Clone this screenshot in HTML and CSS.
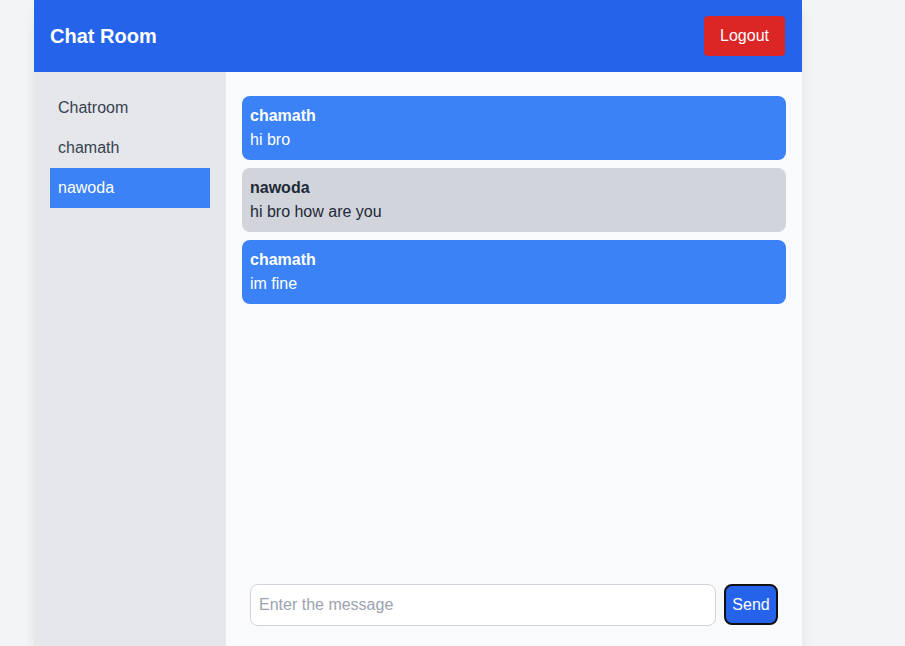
FILE: index.html
```html
<!DOCTYPE html>
<html>
<head>
<meta charset="utf-8">
<link rel="stylesheet" href="styles.css">
</head>
<body>
<div class="app">
  <header class="topbar">
    <h1 class="title">Chat Room</h1>
    <button class="logout">Logout</button>
  </header>
  <div class="body">
    <aside class="sidebar">
      <div class="room">Chatroom</div>
      <div class="room">chamath</div>
      <div class="room active">nawoda</div>
    </aside>
    <main class="chat">
      <div class="messages">
        <div class="msg mine"><div class="name">chamath</div><div class="text">hi bro</div></div>
        <div class="msg other"><div class="name">nawoda</div><div class="text">hi bro how are you</div></div>
        <div class="msg mine"><div class="name">chamath</div><div class="text">im fine</div></div>
      </div>
      <div class="composer">
        <input class="input" type="text" placeholder="Enter the message">
        <button class="send">Send</button>
      </div>
    </main>
  </div>
</div>
</body>
</html>
```
FILE: styles.css
```css
* { box-sizing: border-box; }
html, body { margin: 0; padding: 0; }
body {
  background: #f3f4f6;
  font-family: "Liberation Sans", Arial, sans-serif;
  font-size: 16px;
  line-height: 24px;
  height: 646px;
  overflow: hidden;
}
.app {
  width: 768px;
  height: 646px;
  margin-left: 34px;
  display: flex;
  flex-direction: column;
  box-shadow: 0 10px 15px -3px rgba(0,0,0,0.1), 0 4px 6px -4px rgba(0,0,0,0.1);
}
.topbar {
  height: 72px;
  background: #2563eb;
  display: flex;
  align-items: center;
  justify-content: space-between;
  padding: 16px 17px 16px 16px;
  flex-shrink: 0;
}
.title {
  margin: 0;
  color: #fff;
  font-size: 20px;
  line-height: 28px;
  font-weight: 700;
}
.logout {
  background: #dc2626;
  color: #fff;
  border: none;
  border-radius: 4px;
  padding: 8px 16px;
  font-family: inherit;
  font-size: 16px;
  line-height: 24px;
  height: 40px;
  margin-top: -1px;
}
.body {
  flex: 1;
  display: flex;
  min-height: 0;
}
.sidebar {
  width: 192px;
  background: #e5e7eb;
  padding: 16px;
  flex-shrink: 0;
}
.room {
  padding: 8px;
  color: #374151;
  height: 40px;
}
.room.active {
  background: #3b82f6;
  color: #fff;
}
.chat {
  flex: 1;
  background: #f9fafb;
  padding: 16px 16px 16px 16px;
  display: flex;
  flex-direction: column;
}
.messages {
  flex: 1;
  padding-top: 8px;
  display: flex;
  flex-direction: column;
  gap: 8px;
}
.msg {
  padding: 8px;
  border-radius: 8px;
}
.msg.mine { background: #3b82f6; color: #fff; }
.msg.other { background: #d1d5db; color: #1f2937; }
.name { font-weight: 700; }
.composer {
  display: flex;
  gap: 8px;
  padding: 8px 8px 4px 8px;
  align-items: flex-start;
}
.input {
  flex: 1;
  height: 42px;
  border: 1px solid #d1d5db;
  border-radius: 8px;
  padding: 8px;
  font-family: inherit;
  font-size: 16px;
  background: #fff;
  outline: none;
}
.input::placeholder { color: #9ca3af; }
.send {
  height: 41px;
  width: 54px;
  background: #2563eb;
  color: #fff;
  border: 2px solid #111;
  border-radius: 8px;
  font-family: inherit;
  font-size: 16px;
  padding: 0;
}
```
